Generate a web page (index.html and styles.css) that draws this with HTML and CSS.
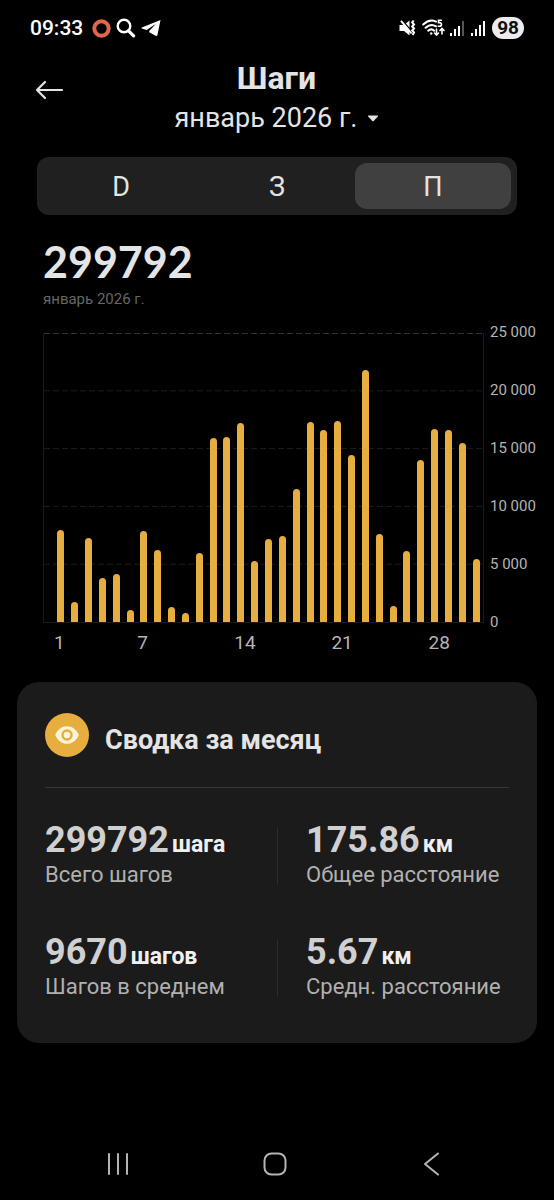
FILE: index.html
```html
<!DOCTYPE html>
<html lang="ru">
<head>
    <meta charset="UTF-8">
    <meta name="viewport" content="width=device-width, initial-scale=1.0">
    <link rel="stylesheet" href="styles.css">
    <title>Шаги</title>
</head>
<body>
    <div class="status-bar">
        <div class="status-left">
            <span class="clock">09:33</span>
            <svg width="19" height="19" viewBox="0 0 19 19"><circle cx="9.5" cy="9.5" r="7.2" fill="none" stroke="#e0674a" stroke-width="4"/></svg>
            <svg width="20" height="20" viewBox="0 0 20 20" fill="none" stroke="#fff" stroke-width="2.4" stroke-linecap="round"><circle cx="8" cy="8" r="6.3"/><path d="M12.6 12.8l5 5" stroke-width="3.2"/></svg>
            <svg width="20" height="18" viewBox="0 0 20 18" fill="#fff"><path d="M19.5 1L.8 8.6c-.4.2-.4.7 0 .9l4.9 1.600L15 4.800 8.200 12v1.200l6.400 3.500c.9.4 1.700.2 1.900-.9z"/></svg>
        </div>
        <div class="status-right">
            <svg class="mute" width="17" height="18" viewBox="0 0 17 18"><path d="M.5 6h4.500L10.500 1.500v15L5 12H.5z" fill="#fff"/><path d="M3.600 1.600L13 12.500" stroke="#000" stroke-width="1.300"/><path d="M2 1.800l10.500 12.700" stroke="#fff" stroke-width="1.900"/><path d="M14.600 1.500l-1.400 2 1.800 2-1.800 2 1.800 2-1.800 2 1.800 2-1.400 2.500" fill="none" stroke="#fff" stroke-width="2"/></svg>
            <svg class="wifi" width="23" height="18" viewBox="0 0 23 18" fill="none" stroke="#fff" stroke-width="2" stroke-linecap="round"><path d="M1.200 5.500Q7.500-.5 14 2.600M3.600 8.800q5-4.800 10.400-1.500M6.200 11.700q3-2.600 6 0"/><circle cx="9.200" cy="14.500" r="1.200" fill="#fff" stroke="none"/><path d="M19.300 1.200h-2.800v2.400h1.200c2.400 0 2.400 3.600-.2 3.600h-1.300" stroke-width="1.600"/><path d="M14.500 10v6m-2-2l2 2 2-2M20 15V9.500m-2 2l2-2 2 2" stroke-width="1.600"/></svg>
            <svg width="15" height="15" viewBox="0 0 15 15"><path d="M0 12h2v3H0zM4 8h2v7H4zM8 5h2v10H8z" fill="#fff"/><path d="M12 0h2v15h-2z" fill="#555"/></svg>
            <svg width="15" height="15" viewBox="0 0 15 15" fill="#fff"><path d="M0 12h2v3H0zM4 8h2v7H4zM8 4h2v11H8zM12 0h2v15h-2z"/></svg>
            <span class="battery">98</span>
        </div>
    </div>

    <header class="header">
        <button class="back" aria-label="Назад">
            <svg width="29" height="20" viewBox="0 0 29 20" fill="none" stroke="#e4e4e4" stroke-width="2.200" stroke-linecap="round" stroke-linejoin="round"><path d="M27 10H2M10 2L2 10l8 8"/></svg>
        </button>
        <div class="heading">
            <h1>Шаги</h1>
            <label class="month">
                <select aria-label="Месяц">
                    <option>январь 2026 г.</option>
                </select>
                <svg width="12" height="7" viewBox="0 0 12 7"><path d="M1.500.5h9q1 0 .3.900L6.700 6q-.7.700-1.400 0L1.200 1.400Q.5.500 1.500.5z" fill="#e4e4e4"/></svg>
            </label>
        </div>
    </header>

    <main>
        <div class="tabs" role="tablist">
            <button class="tab" role="tab" aria-selected="false">D</button>
            <button class="tab" role="tab" aria-selected="false">З</button>
            <button class="tab active" role="tab" aria-selected="true">П</button>
        </div>

        <section class="total">
            <div class="total-value">299792</div>
            <div class="total-date">январь 2026 г.</div>
        </section>

        <section class="chart">
            <div class="plot">
                <svg class="grid" width="100%" height="100%">
                    <line x1="0" x2="100%" y1="20%" y2="20%"/>
                    <line x1="0" x2="100%" y1="40%" y2="40%"/>
                    <line x1="0" x2="100%" y1="60%" y2="60%"/>
                    <line x1="0" x2="100%" y1="80%" y2="80%"/>
                    <line x1="0" x2="100%" y1="0" y2="0" class="top-line"/>
                </svg>
                <div class="bars" id="bars"></div>
            </div>
            <div class="y-axis">
                <span>25 000</span>
                <span>20 000</span>
                <span>15 000</span>
                <span>10 000</span>
                <span>5 000</span>
                <span>0</span>
            </div>
            <div class="x-axis">
                <span class="day-1">1</span>
                <span class="day-7">7</span>
                <span class="day-14">14</span>
                <span class="day-21">21</span>
                <span class="day-28">28</span>
            </div>
        </section>

        <section class="card">
            <div class="card-header">
                <span class="card-icon">
                    <svg width="26" height="20" viewBox="0 0 26 20"><path d="M1.200 10C3.500 4.200 8 1.200 13 1.200S22.500 4.200 24.800 10C22.500 15.800 18 18.800 13 18.800S3.500 15.800 1.200 10z" fill="#fdf3d8"/><circle cx="13" cy="10" r="4.500" fill="#fdf3d8" stroke="#e5ae3e" stroke-width="2.400"/></svg>
                </span>
                <h2>Сводка за месяц</h2>
            </div>
            <div class="stats">
                <div class="stat">
                    <div class="stat-value">299792<span class="unit">шага</span></div>
                    <div class="stat-label">Всего шагов</div>
                </div>
                <div class="stat">
                    <div class="stat-value">175.86<span class="unit">км</span></div>
                    <div class="stat-label">Общее расстояние</div>
                </div>
                <div class="stat">
                    <div class="stat-value">9670<span class="unit">шагов</span></div>
                    <div class="stat-label">Шагов в среднем</div>
                </div>
                <div class="stat">
                    <div class="stat-value">5.67<span class="unit">км</span></div>
                    <div class="stat-label">Средн. расстояние</div>
                </div>
            </div>
        </section>
    </main>

    <nav class="nav-bar">
        <button aria-label="Недавние">
            <svg width="24" height="24" viewBox="0 0 24 24" stroke="#b4b4b4" stroke-width="2" stroke-linecap="round"><path d="M3 2v20M12 2v20M21 2v20"/></svg>
        </button>
        <button aria-label="Домой">
            <svg width="24" height="24" viewBox="0 0 24 24" fill="none" stroke="#b4b4b4" stroke-width="2"><rect x="1.500" y="1.500" width="21" height="21" rx="7"/></svg>
        </button>
        <button aria-label="Назад">
            <svg width="24" height="24" viewBox="0 0 24 24" fill="none" stroke="#b4b4b4" stroke-width="2" stroke-linecap="round" stroke-linejoin="round"><path d="M18 1.500L5 12l13 10.500"/></svg>
        </button>
    </nav>

    <script>
        const MAX_STEPS = 25000;
        const steps = [
            7948, 1707, 7259, 3836, 4121, 1017, 7888, 6224, 1276, 759, 5991,
            15879, 15991, 17198, 5276, 7172, 7457, 11483, 17345, 16595, 17397,
            14440, 21767, 7629, 1362, 6164, 14034, 16707, 16621, 15474, 5474
        ];

        const bars = document.getElementById('bars');
        steps.forEach(function (value) {
            const bar = document.createElement('div');
            bar.className = 'bar';
            bar.style.height = (value / MAX_STEPS * 100) + '%';
            bars.appendChild(bar);
        });
    </script>
</body>
</html>
```
FILE: styles.css
```css
* {
    box-sizing: border-box;
}

body {
    font-family: Roboto, "Noto Sans", sans-serif;
    background-color: #000;
    color: #e4e4e4;
    margin: 0;
    min-height: 100vh;
    display: flex;
    flex-direction: column;
}

h1, h2 {
    margin: 0;
    font-weight: 700;
}

button, select {
    font: inherit;
    color: inherit;
    background: none;
    border: none;
    padding: 0;
    cursor: pointer;
}

svg {
    display: block;
    flex: none;
}

/* phone status bar */
.status-bar {
    display: flex;
    justify-content: space-between;
    align-items: center;
    height: 56px;
    padding: 0 30px;
    color: #fff;
}

.status-left, .status-right {
    display: flex;
    align-items: center;
    gap: 5px;
}

.clock {
    font-size: 21px;
    font-weight: 500;
    margin-right: 4px;
}

.status-right {
    gap: 6px;
}

.wifi {
    margin-right: -1px;
}

.battery {
    background-color: #ececec;
    color: #111;
    font-size: 19px;
    font-weight: 700;
    line-height: 22px;
    padding: 0 5px;
    border-radius: 11px;
}

/* title */
.header {
    display: grid;
    grid-template-columns: 48px 1fr 48px;
    align-items: start;
    padding: 4px 26px 0 25px;
}

.back {
    display: flex;
    align-items: center;
    justify-content: center;
    height: 60px;
}

.heading {
    display: flex;
    flex-direction: column;
    align-items: center;
}

h1 {
    font-size: 32px;
    line-height: 36px;
}

.month {
    display: flex;
    align-items: center;
    font-size: 27px;
    line-height: 44px;
}

.month select {
    appearance: none;
    height: 44px;
    padding-right: 20px;
}

.month svg {
    margin-left: -11px;
    pointer-events: none;
}

/* period switch */
.tabs {
    display: flex;
    margin: 17px 37px 0;
    padding: 6px;
    background-color: #202020;
    border-radius: 12px;
}

.tab {
    flex: 1;
    height: 46px;
    font-size: 27px;
    padding-top: 2px;
    border-radius: 12px;
}

.tab.active {
    background-color: #404040;
}

.total {
    padding: 20px 43px 0;
}

.total-value {
    font-family: Lato, sans-serif;
    font-size: 43px;
    font-weight: 700;
    line-height: 54px;
}

.total-date {
    font-size: 15px;
    line-height: 20px;
    color: #666;
}

/* chart */
.chart {
    display: grid;
    grid-template-columns: 1fr 46px;
    column-gap: 6px;
    padding: 24px 18px 0 43px;
    color: #b4b4b4;
}

.plot {
    position: relative;
    height: 290px;
    border-left: 1px solid #1c1c1c;
    border-right: 1px solid #1c1c1c;
    border-bottom: 1px solid #1a1a1a;
}

.grid {
    position: absolute;
    inset: 0;
}

.grid line {
    stroke: #1c1c1c;
    stroke-width: 1;
    stroke-dasharray: 6 3;
}

.grid .top-line {
    stroke: #333;
    stroke-width: 2;
}

.bars {
    position: relative;
    display: grid;
    grid-template-columns: repeat(31, 1fr);
    align-items: end;
    justify-items: center;
    height: 100%;
    padding-left: 10px;
}

.bar {
    width: 7px;
    background-color: #e5ae3e;
    border-radius: 4px 4px 0 0;
}

.y-axis {
    display: flex;
    flex-direction: column;
    justify-content: space-between;
    margin: -11px 0 -9px;
    font-size: 15px;
    line-height: 20px;
    white-space: nowrap;
}

.x-axis {
    display: grid;
    grid-template-columns: repeat(31, minmax(0, 1fr));
    padding: 8px 0 0 11px;
    font-size: 19px;
    line-height: 24px;
}

.day-1 {
    grid-column: 1;
}

.day-7 {
    grid-column: 7;
}

.day-14 {
    grid-column: 14;
}

.day-21 {
    grid-column: 21;
}

.day-28 {
    grid-column: 28;
}

/* month summary */
.card {
    margin: 27px 17px 0;
    padding: 31px 28px 46px;
    background-color: #1b1b1b;
    border-radius: 22px;
}

.card-header {
    display: flex;
    gap: 16px;
    padding-bottom: 30px;
    border-bottom: 1px solid #383838;
}

.card-icon {
    display: flex;
    align-items: center;
    justify-content: center;
    width: 44px;
    height: 44px;
    border-radius: 50%;
    background-color: #e5ae3e;
}

h2 {
    font-size: 27px;
    line-height: 30px;
    padding-top: 12px;
}

.stats {
    display: grid;
    grid-template-columns: 1fr 1fr;
    row-gap: 54px;
    padding-top: 39px;
}

.stat {
    height: 58px;
    white-space: nowrap;
}

.stat:nth-child(even) {
    border-left: 1px solid #2c2c2c;
    padding-left: 28px;
}

.stat-value {
    font-size: 36px;
    font-weight: 700;
    line-height: 26px;
    color: #d0d0d0;
}

.unit {
    font-size: 23px;
    color: #f0f0f0;
    margin-left: 3px;
}

.stat-label {
    font-size: 22px;
    line-height: 30px;
    margin-top: 2px;
    color: #b0b0b0;
}

/* system navigation */
.nav-bar {
    display: flex;
    justify-content: space-around;
    align-items: center;
    height: 72px;
    margin-top: auto;
    padding: 0 44px 0 39px;
}

.nav-bar button {
    padding: 12px;
}
```
